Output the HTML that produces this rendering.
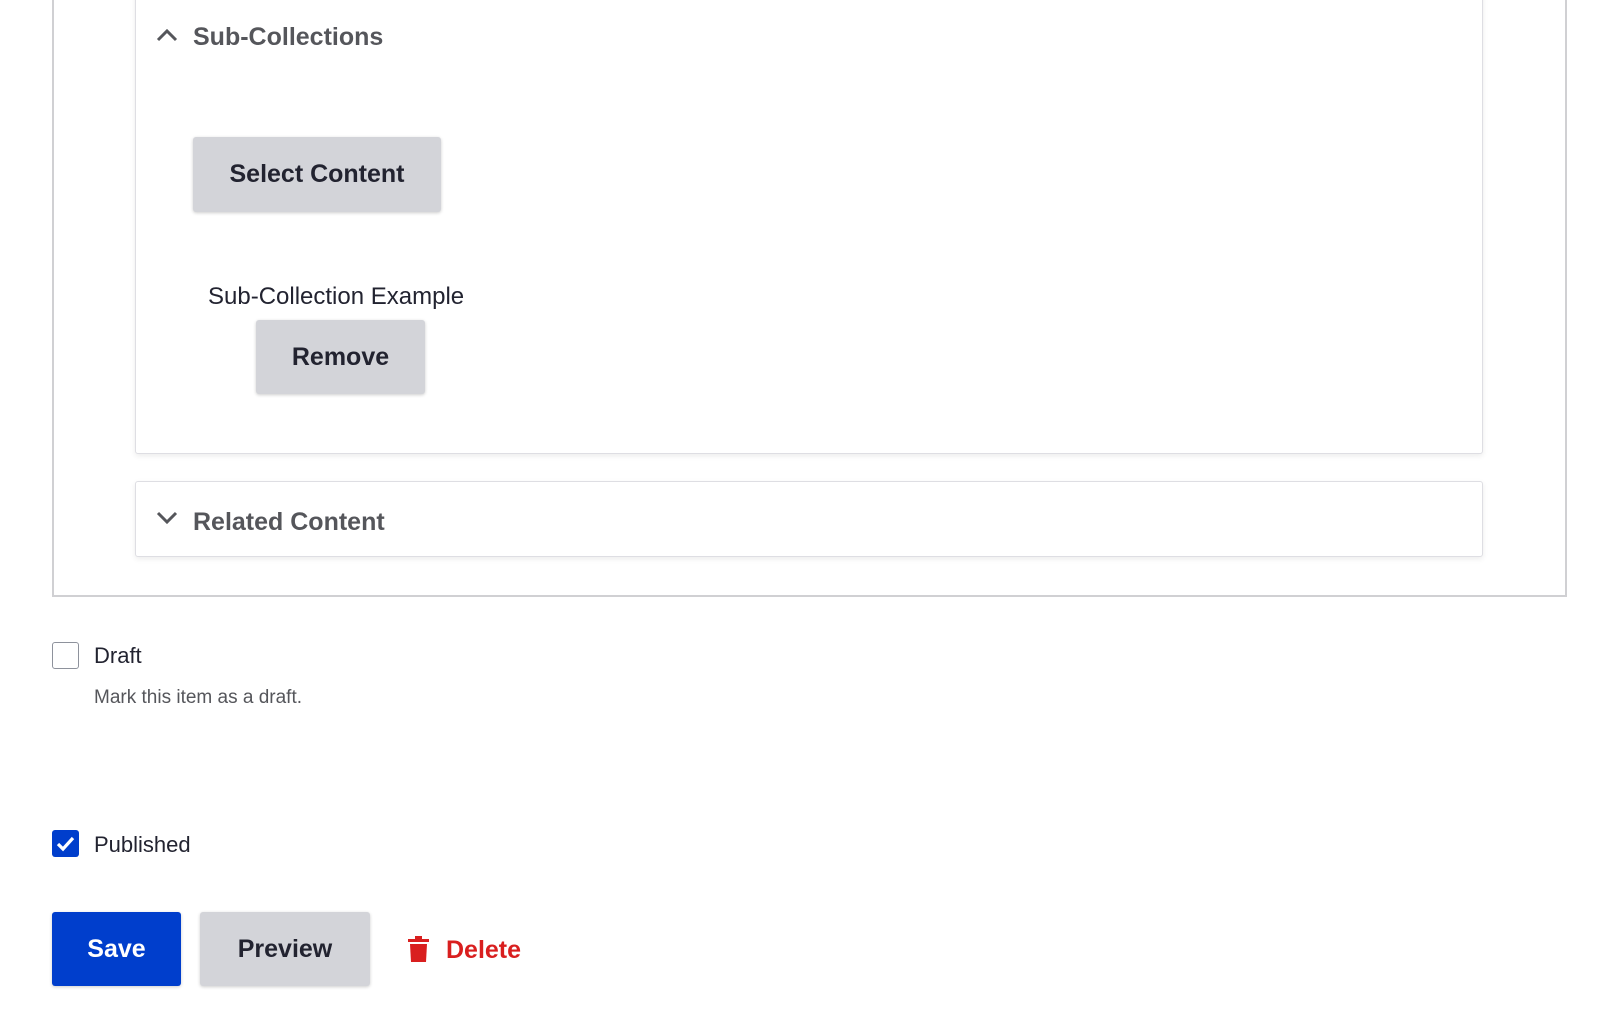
<!DOCTYPE html>
<html><head><meta charset="utf-8"><style>
*{margin:0;padding:0;box-sizing:border-box}
body{width:1615px;height:1026px;background:#fff;position:relative;overflow:hidden;font-family:"Liberation Sans",sans-serif;color:#222330}
.a{position:absolute}
.outer{left:52px;top:-10px;width:1515px;height:607px;border:2px solid #d0d0d3;border-top:none}
.box{left:135px;width:1348px;border:1px solid #dedee3;border-radius:3px;box-shadow:0 2px 6px rgba(0,0,0,.08);background:#fff}
.h{font-weight:bold;font-size:25px;color:#55565b;line-height:30px}
.btn{background:#d3d4d9;border-radius:3px;box-shadow:0 1px 3px rgba(0,0,0,.2);font-weight:bold;font-size:25px;color:#222330;display:flex;align-items:center;justify-content:center}
</style></head><body>
<div class="a outer"></div>
<div class="a box" style="top:-10px;height:464px"></div>
<svg class="a" style="left:155px;top:27px" width="24" height="16" viewBox="0 0 24 16"><path d="M3 13 L12 4 L21 13" fill="none" stroke="#55565b" stroke-width="3"/></svg>
<div class="a h" style="left:193px;top:22px">Sub-Collections</div>
<div class="a btn" style="left:193px;top:137px;width:248px;height:75px">Select Content</div>
<div class="a" style="left:208px;top:282px;font-size:24px;line-height:30px">Sub-Collection Example</div>
<div class="a btn" style="left:256px;top:320px;width:169px;height:74px">Remove</div>
<div class="a box" style="top:481px;height:76px"></div>
<svg class="a" style="left:155px;top:510px" width="24" height="16" viewBox="0 0 24 16"><path d="M3 3 L12 12 L21 3" fill="none" stroke="#55565b" stroke-width="3"/></svg>
<div class="a h" style="left:193px;top:507px">Related Content</div>
<div class="a" style="left:52px;top:642px;width:27px;height:27px;border:1.5px solid #8e929c;border-radius:3px"></div>
<div class="a" style="left:94px;top:642px;font-size:22px;line-height:28px">Draft</div>
<div class="a" style="left:94px;top:686px;font-size:19px;line-height:24px;color:#55565b">Mark this item as a draft.</div>
<div class="a" style="left:52px;top:830px;width:27px;height:27px;background:#003ecc;border-radius:3px"></div>
<svg class="a" style="left:52px;top:830px" width="27" height="27" viewBox="0 0 27 27"><path d="M6 14 L11 19 L21 8" fill="none" stroke="#fff" stroke-width="3.2"/></svg>
<div class="a" style="left:94px;top:831px;font-size:22px;line-height:28px">Published</div>
<div class="a btn" style="left:52px;top:912px;width:129px;height:74px;background:#003ecc;color:#fff">Save</div>
<div class="a btn" style="left:200px;top:912px;width:170px;height:74px">Preview</div>
<svg class="a" style="left:407px;top:935px" width="23" height="28" viewBox="0 0 23 28"><path d="M8 1 H15 V4 H22 V7 H1 V4 H8 Z" fill="#d91f1f"/><path d="M3 9 H20 L19 27 H4 Z" fill="#d91f1f"/></svg>
<div class="a" style="left:446px;top:935px;font-size:25px;font-weight:bold;color:#d91f1f;line-height:30px">Delete</div>
</body></html>
